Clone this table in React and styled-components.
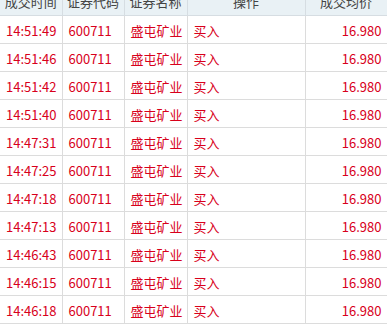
import React from "react";
import styled, { createGlobalStyle } from "styled-components";

const GlobalStyle = createGlobalStyle`
  html, body {
    margin: 0;
    padding: 0;
    background: #fff;
  }
  body {
    font-family: "Noto Sans CJK SC", "Noto Sans", sans-serif;
  }
`;

const Viewport = styled.div`
  width: 387px;
  height: 326px;
  overflow: hidden;
`;

const Table = styled.table`
  width: 387px;
  border-collapse: collapse;
  table-layout: fixed;
  margin-top: -12px;
  font-size: 13px;
`;

const HeadCell = styled.th`
  height: 27px;
  padding: 0;
  background: #e9f1f5;
  border-right: 1px solid #d6dde2;
  border-bottom: 1px solid #d6dde2;
  color: #444;
  font-weight: normal;
  text-align: center;
  white-space: nowrap;
`;

const Row = styled.tr`
  height: 28px;
`;

const Cell = styled.td`
  padding: 1px ${(p) => (p.$right ? "5px" : "6px")} 0;
  border-right: 1px solid #dcdcdc;
  border-bottom: 1px solid #dcdcdc;
  color: #d8001b;
  text-align: ${(p) => (p.$right ? "right" : "left")};
  white-space: nowrap;
`;

const columns = [
  { title: "成交时间", width: 62 },
  { title: "证券代码", width: 62 },
  { title: "证券名称", width: 63 },
  { title: "操作", width: 118 },
  { title: "成交均价", width: 82 },
];

const times = [
  "14:51:49",
  "14:51:46",
  "14:51:42",
  "14:51:40",
  "14:47:31",
  "14:47:25",
  "14:47:18",
  "14:47:13",
  "14:46:43",
  "14:46:15",
  "14:46:18",
];

const trades = times.map((time) => ({
  time,
  code: "600711",
  name: "盛屯矿业",
  action: "买入",
  price: "16.980",
}));

export default function App() {
  return (
    <>
      <GlobalStyle />
      <Viewport>
        <Table>
          <colgroup>
            {columns.map((c) => (
              <col key={c.title} style={{ width: c.width }} />
            ))}
          </colgroup>
          <thead>
            <tr>
              {columns.map((c) => (
                <HeadCell key={c.title}>{c.title}</HeadCell>
              ))}
            </tr>
          </thead>
          <tbody>
            {trades.map((t, i) => (
              <Row key={i}>
                <Cell>{t.time}</Cell>
                <Cell>{t.code}</Cell>
                <Cell>{t.name}</Cell>
                <Cell>{t.action}</Cell>
                <Cell $right>{t.price}</Cell>
              </Row>
            ))}
          </tbody>
        </Table>
      </Viewport>
    </>
  );
}
